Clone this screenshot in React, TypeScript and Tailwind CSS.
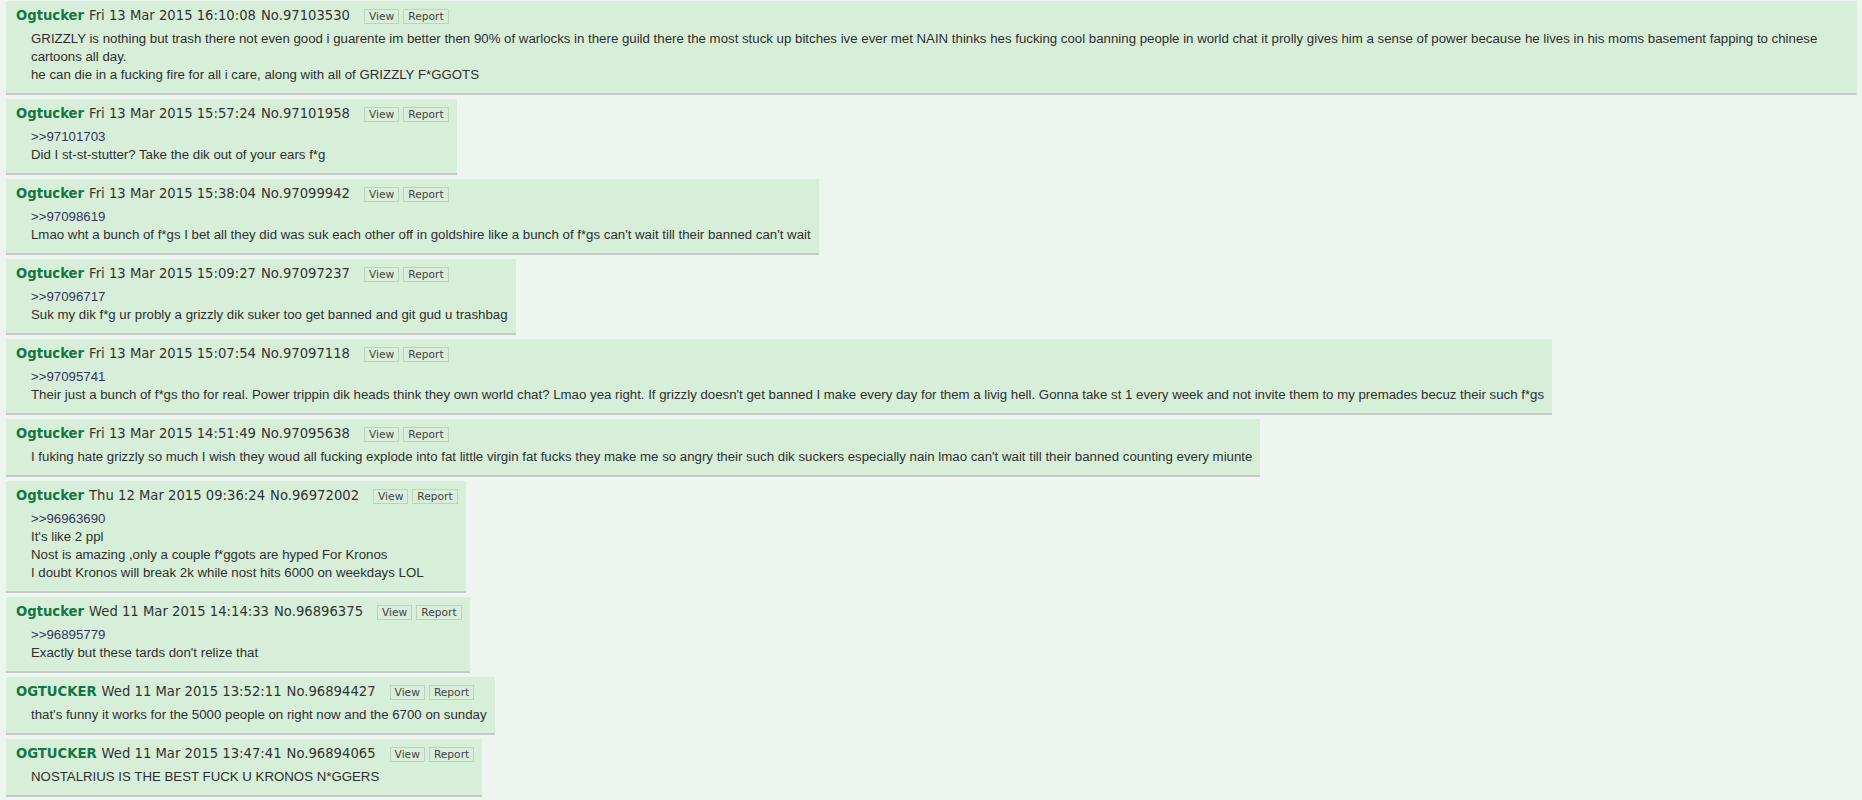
const posts = [
  {
    name: 'Ogtucker',
    date: 'Fri 13 Mar 2015 16:10:08',
    no: '97103530',
    lines: [
      'GRIZZLY is nothing but trash there not even good i guarente im better then 90% of warlocks in there guild there the most stuck up bitches ive ever met NAIN thinks hes fucking cool banning people in world chat it prolly gives him a sense of power because he lives in his moms basement fapping to chinese cartoons all day.',
      'he can die in a fucking fire for all i care, along with all of GRIZZLY F*GGOTS',
    ],
  },
  {
    name: 'Ogtucker',
    date: 'Fri 13 Mar 2015 15:57:24',
    no: '97101958',
    quote: '97101703',
    lines: ['Did I st-st-stutter? Take the dik out of your ears f*g'],
  },
  {
    name: 'Ogtucker',
    date: 'Fri 13 Mar 2015 15:38:04',
    no: '97099942',
    quote: '97098619',
    lines: [
      "Lmao wht a bunch of f*gs I bet all they did was suk each other off in goldshire like a bunch of f*gs can't wait till their banned can't wait",
    ],
  },
  {
    name: 'Ogtucker',
    date: 'Fri 13 Mar 2015 15:09:27',
    no: '97097237',
    quote: '97096717',
    lines: ['Suk my dik f*g ur probly a grizzly dik suker too get banned and git gud u trashbag'],
  },
  {
    name: 'Ogtucker',
    date: 'Fri 13 Mar 2015 15:07:54',
    no: '97097118',
    quote: '97095741',
    lines: [
      "Their just a bunch of f*gs tho for real. Power trippin dik heads think they own world chat? Lmao yea right. If grizzly doesn't get banned I make every day for them a livig hell. Gonna take st 1 every week and not invite them to my premades becuz their such f*gs",
    ],
  },
  {
    name: 'Ogtucker',
    date: 'Fri 13 Mar 2015 14:51:49',
    no: '97095638',
    lines: [
      "I fuking hate grizzly so much I wish they woud all fucking explode into fat little virgin fat fucks they make me so angry their such dik suckers especially nain lmao can't wait till their banned counting every miunte",
    ],
  },
  {
    name: 'Ogtucker',
    date: 'Thu 12 Mar 2015 09:36:24',
    no: '96972002',
    quote: '96963690',
    lines: [
      "It's like 2 ppl",
      'Nost is amazing ,only a couple f*ggots are hyped For Kronos',
      'I doubt Kronos will break 2k while nost hits 6000 on weekdays LOL',
    ],
  },
  {
    name: 'Ogtucker',
    date: 'Wed 11 Mar 2015 14:14:33',
    no: '96896375',
    quote: '96895779',
    lines: ["Exactly but these tards don't relize that"],
  },
  {
    name: 'OGTUCKER',
    date: 'Wed 11 Mar 2015 13:52:11',
    no: '96894427',
    lines: ["that's funny it works for the 5000 people on right now and the 6700 on sunday"],
  },
  {
    name: 'OGTUCKER',
    date: 'Wed 11 Mar 2015 13:47:41',
    no: '96894065',
    lines: ['NOSTALRIUS IS THE BEST FUCK U KRONOS N*GGERS'],
  },
]

function Post({ post }) {
  return (
    <div className="w-fit max-w-full border-b-2 border-[#c7cbc7] bg-[#d7efd9] pt-1.5 pr-2 pb-[9px] pl-2.5">
      <div className="flex h-[18px] items-center whitespace-nowrap font-['DejaVu_Sans',sans-serif] text-[13.2px] text-[#333]">
        <span className="font-bold text-[#117743]">{post.name}</span>
        <span className="ml-[5px]">{post.date}</span>
        <span className="ml-[5px]">No.{post.no}</span>
        <span className="ml-[14px] flex gap-1 text-[10.67px] leading-[13px] text-[#444]">
          <span className="border border-[#bcd3bc] bg-[#d9efda] px-1">View</span>
          <span className="border border-[#bcd3bc] bg-[#d9efda] px-1">Report</span>
        </span>
      </div>
      <div className="mt-[5px] ml-[15px] font-['Liberation_Sans',Arial,sans-serif] text-[13.26px] leading-[18px] text-[#2e2e2e]">
        {post.quote && <div className="text-[#34345c]">&gt;&gt;{post.quote}</div>}
        {post.lines.map((line, i) => (
          <div key={i}>{line}</div>
        ))}
      </div>
    </div>
  )
}

export default function App() {
  return (
    <div className="min-h-[800px] bg-[#edf6ee] pt-px pr-[5px] pl-1.5">
      <div className="flex flex-col items-start gap-1">
        {posts.map((post) => (
          <Post key={post.no} post={post} />
        ))}
      </div>
    </div>
  )
}
